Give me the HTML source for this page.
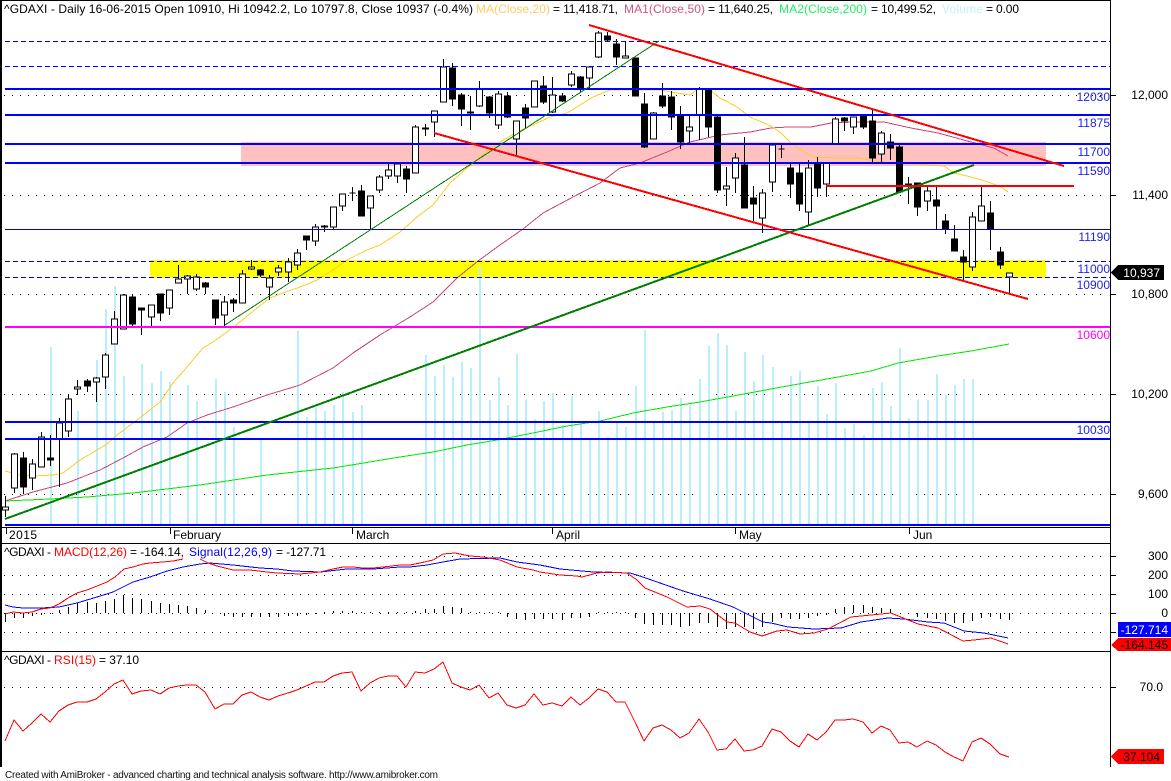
<!DOCTYPE html>
<html><head><meta charset="utf-8"><title>GDAXI</title>
<style>
html,body{margin:0;padding:0;background:#fff;width:1171px;height:781px;overflow:hidden}
svg{display:block}
text{font-family:"Liberation Sans",Arial,sans-serif;font-size:12px;fill:#000}
.c{shape-rendering:crispEdges}
.b{fill:#00f}
</style></head><body>
<svg width="1171" height="781" viewBox="0 0 1171 781" xmlns="http://www.w3.org/2000/svg">
<rect width="1171" height="781" fill="#fff"/>
<g class="c">
<rect x="241" y="142" width="805" height="24" fill="#ffc0c0"/>
<rect x="150" y="260" width="896" height="18" fill="#ff0"/>
<path fill="none" stroke="#000" stroke-dasharray="1 7" d="M4 95.5H1108M4 195.5H1108M4 294.5H1108M4 394.5H1108M4 494.5H1108M4 556.5H1108M4 575.5H1108M4 594.5H1108M4 613.5H1108M4 632.5H1108M4 687.5H1108"/>
<path fill="none" stroke="#b9eeff" stroke-width="2" d="M51 347V526M78 411V526M97 360V526M106 309V526M115 286V526M124 376V526M142 364V526M152 383V526M161 371V526M170 382V526M188 385V526M197 401V526M216 379V526M225 392V526M234 427V526M261 439V526M298 331V526M307 417V526M316 407V526M325 411V526M334 405V526M343 392V526M353 412V526M362 405V526M426 355V526M435 376V526M444 365V526M453 377V526M462 362V526M471 368V526M480 266V526M490 400V526M499 377V526M508 405V526M517 354V526M526 400V526M535 419V526M544 401V526M553 393V526M563 425V526M572 396V526M581 423V526M590 439V526M599 411V526M608 437V526M617 422V526M626 427V526M636 386V526M645 330V526M654 422V526M663 412V526M672 410V526M681 398V526M690 405V526M700 379V526M709 346V526M718 333V526M727 345V526M736 411V526M745 352V526M754 381V526M763 355V526M773 367V526M782 422V526M791 376V526M800 371V526M809 422V526M818 386V526M827 414V526M836 383V526M845 428V526M854 424V526M864 435V526M873 388V526M882 382V526M891 406V526M900 348V526M909 418V526M918 400V526M928 400V526M937 374V526M946 395V526M955 385V526M964 379V526M973 379V526"/>
<polyline fill="none" stroke="#00e800" points="5,501 50,499 87,497 133,493 200,485 267,475 333,468 400,457 433,452 467,445 497,440 533,433 567,426 600,421 633,413 667,407 700,402 733,396 771,389 804,383 838,377 871,371 898,363 938,356 971,351 1009,344"/>
<polyline fill="none" stroke="#cc4477" points="5,501 33,492 67,483 100,470 123,458 143,447 167,437 187,423 207,415 233,407 267,395 300,385 333,368 353,353 380,335 400,323 410,317 433,302 457,278 478,261 500,245 523,229 543,213 573,197 600,183 620,168 640,163 667,152 690,142 720,135 750,132 771,128 788,127 811,127 831,123 854,122 884,122 911,128 938,133 971,142 994,148 1008,156"/>
<polyline fill="none" stroke="#ffcc22" points="5,471 20,475 33,476 53,475 63,473 80,460 97,450 107,444 117,435 133,423 150,410 160,402 173,383 187,367 203,348 213,342 227,332 240,322 257,308 270,298 283,293 300,287 317,280 333,270 347,260 367,250 380,245 400,232 417,217 433,205 450,183 467,168 480,157 500,142 517,132 533,125 550,117 567,113 577,107 593,97 610,90 642,90 660,90 677,93 690,95 697,90 710,90 720,98 737,107 750,117 771,126 781,133 791,143 804,152 814,157 838,158 858,158 881,162 914,164 944,166 954,173 971,177 988,182 1001,187 1008,192"/>
<path fill="none" stroke="#000" d="M5.5 496V517M14.5 453V493M23.5 452V494M32.5 459V490M41.5 432V467M50.5 435V466M59.5 418V487M68.5 394V437M77.5 380V395M87.5 379V392M96.5 377V402M105.5 353V389M114.5 311V344M123.5 294V329M132.5 294V328M141.5 308V335M151.5 305V326M160.5 294V321M169.5 290V315M178.5 265V283M187.5 275V294M196.5 274V291M205.5 282V294M215.5 300V325M224.5 296V328M233.5 298V312M242.5 270V303M251.5 260V270M260.5 269V277M269.5 275V300M278.5 265V276M288.5 258V282M297.5 249V270M306.5 236V250M315.5 224V246M324.5 225V232M333.5 207V229M342.5 194V211M352.5 187V201M361.5 185V216M370.5 196V229M379.5 175V193M388.5 164V179M397.5 164V183M406.5 166V193M415.5 125V173M425.5 124V136M434.5 111V137M443.5 59V102M452.5 63V106M461.5 93V126M470.5 96V130M479.5 81V107M489.5 96V118M498.5 91V129M507.5 92V118M516.5 121V155M525.5 104V128M534.5 81V107M543.5 76V104M552.5 77V113M562.5 93V102M571.5 71V87M580.5 76V92M589.5 67V89M598.5 31V58M607.5 32V41M616.5 39V65M625.5 41V58M635.5 58V96M644.5 93V148M653.5 112V139M662.5 83V108M671.5 91V130M680.5 106V149M689.5 116V143M699.5 87V140M708.5 89V137M717.5 116V193M726.5 167V206M735.5 153V193M744.5 137V208M753.5 186V221M762.5 189V233M772.5 144V192M781.5 144V158M790.5 163V198M799.5 163V211M808.5 160V225M817.5 157V197M826.5 162V197M835.5 117V144M844.5 117V131M853.5 117V134M863.5 115V129M872.5 110V162M881.5 131V162M890.5 134V160M899.5 145V192M908.5 177V204M917.5 183V216M927.5 185V211M936.5 187V229M945.5 214V234M954.5 225V251M963.5 250V281M972.5 212V271M981.5 187V221M990.5 201V250M1000.5 247V269M1009.5 273V293"/>
<path fill="#fff" stroke="#000" d="M2.5 507h6V510h-6zM11.5 454h6V488h-6zM29.5 464h6V478h-6zM38.5 437h6V467h-6zM56.5 423h6V439h-6zM65.5 399h6V431h-6zM74.5 387h6V389h-6zM93.5 378h6V382h-6zM102.5 355h6V377h-6zM111.5 319h6V344h-6zM120.5 295h6V329h-6zM148.5 305h6V317h-6zM166.5 290h6V308h-6zM175.5 279h6V283h-6zM184.5 276h6V279h-6zM193.5 277h6V289h-6zM221.5 302h6V315h-6zM239.5 274h6V303h-6zM248.5 267h6V269h-6zM266.5 278h6V287h-6zM275.5 268h6V272h-6zM285.5 262h6V272h-6zM294.5 253h6V265h-6zM312.5 227h6V241h-6zM330.5 207h6V227h-6zM339.5 194h6V206h-6zM367.5 196h6V208h-6zM376.5 177h6V190h-6zM385.5 170h6V176h-6zM394.5 164h6V176h-6zM412.5 127h6V173h-6zM431.5 111h6V122h-6zM440.5 67h6V102h-6zM476.5 89h6V106h-6zM495.5 94h6V125h-6zM513.5 121h6V139h-6zM531.5 81h6V107h-6zM549.5 95h6V112h-6zM568.5 74h6V85h-6zM586.5 67h6V78h-6zM595.5 33h6V57h-6zM622.5 56h6V58h-6zM650.5 113h6V139h-6zM686.5 127h6V131h-6zM696.5 89h6V115h-6zM723.5 186h6V189h-6zM732.5 158h6V178h-6zM759.5 193h6V218h-6zM769.5 145h6V182h-6zM805.5 168h6V212h-6zM823.5 163h6V184h-6zM832.5 119h6V144h-6zM850.5 117h6V127h-6zM878.5 133h6V154h-6zM924.5 191h6V201h-6zM969.5 217h6V267h-6zM978.5 206h6V221h-6zM1006.5 273h6V277h-6z"/>
<path fill="#000" stroke="#000" d="M20.5 458h6V487h-6zM47.5 458h6V460h-6zM84.5 381h6V386h-6zM129.5 297h6V324h-6zM138.5 308h6V310h-6zM157.5 294h6V313h-6zM202.5 283h6V287h-6zM212.5 300h6V318h-6zM230.5 300h6V303h-6zM257.5 270h6V275h-6zM303.5 236h6V240h-6zM321.5 226h6V227h-6zM349.5 193h6V193h-6zM358.5 191h6V216h-6zM403.5 169h6V179h-6zM422.5 128h6V129h-6zM449.5 68h6V99h-6zM458.5 95h6V109h-6zM467.5 112h6V113h-6zM486.5 97h6V113h-6zM504.5 96h6V117h-6zM522.5 108h6V118h-6zM540.5 86h6V102h-6zM559.5 96h6V101h-6zM577.5 77h6V89h-6zM604.5 36h6V40h-6zM613.5 44h6V57h-6zM632.5 58h6V96h-6zM641.5 104h6V147h-6zM659.5 96h6V106h-6zM668.5 97h6V117h-6zM677.5 116h6V142h-6zM705.5 89h6V127h-6zM714.5 117h6V190h-6zM741.5 165h6V208h-6zM750.5 198h6V204h-6zM778.5 149h6V149h-6zM787.5 168h6V184h-6zM796.5 173h6V204h-6zM814.5 163h6V188h-6zM841.5 118h6V121h-6zM860.5 115h6V127h-6zM869.5 121h6V158h-6zM887.5 142h6V148h-6zM896.5 147h6V192h-6zM905.5 184h6V186h-6zM914.5 183h6V207h-6zM933.5 200h6V206h-6zM942.5 221h6V229h-6zM951.5 239h6V251h-6zM960.5 257h6V262h-6zM987.5 213h6V229h-6zM997.5 252h6V265h-6z"/>
<!-- horizontal study lines -->
<path fill="none" stroke="#00f" d="M5 229.5H1110"/>
<path fill="none" stroke="#00f" stroke-dasharray="5 3" d="M5 41.5H1110M5 66.5H1110M5 261.5H1110M5 277.5H1110"/>
<rect x="5" y="88" width="1105" height="2" class="b"/>
<rect x="5" y="114" width="1105" height="2" class="b"/>
<rect x="5" y="143" width="1105" height="2" class="b"/>
<rect x="5" y="162" width="1105" height="2" class="b"/>
<rect x="5" y="421" width="1105" height="2" class="b"/>
<rect x="5" y="438" width="1105" height="2" class="b"/>
<rect x="5" y="524" width="1105" height="2" class="b"/>
<rect x="5" y="326" width="1105" height="2" fill="#f0f"/>
<!-- trend lines -->
<line x1="225" y1="325" x2="659" y2="41" stroke="#008000"/>
<line x1="5" y1="519" x2="974" y2="165" stroke="#008000" stroke-width="2"/>
<line x1="589" y1="25" x2="1064" y2="166" stroke="#f00" stroke-width="2"/>
<line x1="434" y1="133" x2="1028" y2="299" stroke="#f00" stroke-width="2"/>
<rect x="826" y="185" width="248" height="2" fill="#f00"/>
<!-- frame -->
<rect x="0" y="0" width="1111" height="1" fill="#000"/>
<rect x="0" y="0" width="2" height="767" fill="#000"/>
<rect x="1110" y="0" width="1" height="767" fill="#000"/>
<rect x="0" y="527" width="1110" height="1" fill="#000"/>
<rect x="0" y="543" width="1110" height="1" fill="#000"/>
<rect x="0" y="651" width="1110" height="1" fill="#000"/>
<path fill="none" stroke="#000" d="M6.5 528V534M170.5 528V534M352.5 528V534M552.5 528V534M735.5 528V534M909.5 528V534"/>
<path fill="none" stroke="#000" d="M1111 95.5H1116M1111 195.5H1116M1111 294.5H1116M1111 394.5H1116M1111 494.5H1116M1111 556.5H1116M1111 575.5H1116M1111 594.5H1116M1111 613.5H1116M1111 632.5H1116M1111 687.5H1116"/>
<!-- MACD histogram -->
<path fill="none" stroke="#000" d="M5.5 613V622M14.5 613V618M23.5 613V618M32.5 613V616M41.5 613V615M50.5 613V614M59.5 613V610M68.5 613V607M77.5 613V603M87.5 613V602M96.5 613V603M105.5 613V601M114.5 613V599M123.5 613V595M132.5 613V598M141.5 613V599M151.5 613V601M160.5 613V603M169.5 613V604M178.5 613V605M187.5 613V606M196.5 613V608M205.5 613V610M224.5 613V616M233.5 613V617M242.5 613V617M251.5 613V617M260.5 613V617M269.5 613V617M278.5 613V617M288.5 613V616M297.5 613V616M306.5 613V615M315.5 613V614M324.5 613V612M333.5 613V611M342.5 613V611M352.5 613V611M361.5 613V612M370.5 613V612M379.5 613V612M388.5 613V612M397.5 613V612M406.5 613V612M415.5 613V611M425.5 613V609M434.5 613V609M443.5 613V606M452.5 613V607M461.5 613V608M470.5 613V612M479.5 613V612M489.5 613V612M498.5 613V612M507.5 613V617M516.5 613V619M525.5 613V620M534.5 613V619M543.5 613V619M552.5 613V619M562.5 613V620M571.5 613V618M580.5 613V618M589.5 613V617M598.5 613V612M607.5 613V612M616.5 613V612M625.5 613V612M635.5 613V618M644.5 613V624M653.5 613V625M662.5 613V625M671.5 613V625M680.5 613V627M689.5 613V626M699.5 613V623M708.5 613V623M717.5 613V627M726.5 613V629M735.5 613V627M744.5 613V627M753.5 613V629M762.5 613V627M772.5 613V622M781.5 613V618M790.5 613V619M799.5 613V619M808.5 613V618M817.5 613V616M826.5 613V615M835.5 613V609M844.5 613V607M853.5 613V605M863.5 613V605M872.5 613V607M881.5 613V608M890.5 613V609M908.5 613V614M917.5 613V617M927.5 613V618M936.5 613V619M945.5 613V621M954.5 613V623M963.5 613V623M972.5 613V621M981.5 613V618M990.5 613V617M1000.5 613V619M1009.5 613V620"/>
<rect x="2" y="544" width="330" height="15" fill="#fff"/>
<polyline fill="none" stroke="#00f" points="5,605 13,607 23,608 41,608 59,607 77,603 97,597 113,592 133,582 150,577 167,571 183,567 200,564 210,563 233,565 260,568 277,569 293,571 320,572 347,569 373,569 400,567 410,567 427,565 443,562 460,559 500,558 517,562 540,565 560,569 593,572 630,573 640,576 660,583 683,591 710,599 733,607 763,622 771,623 788,627 814,629 841,628 861,622 888,618 904,619 928,622 944,623 964,631 984,633 1008,638"/>
<polyline fill="none" stroke="#f00" points="5,614 13,612 23,613 32,612 41,609 50,608 59,604 68,598 77,593 87,590 97,586 107,582 115,577 124,569 133,567 143,564 150,563 163,562 173,561 183,559"/>
<polyline fill="none" stroke="#f00" points="200,559 208,563 217,566 233,570 250,570 267,572 277,573 300,574 320,572 333,569 343,567 353,567 363,568 373,568 383,567 400,565 410,565 420,563 433,560 443,554 455,553 470,556 483,557 500,560 517,567 533,570 540,572 560,575 577,576 582,577 597,573 607,572 627,573 637,580 645,588 667,597 687,607 700,606 710,609 727,622 735,623 750,632 762,636 777,631 787,630 800,634 814,633 828,629 851,617 871,615 891,613 918,624 938,628 963,641 974,640 991,638 1008,644"/>
<!-- RSI -->
<polyline fill="none" stroke="#f00" points="5,741 14,720 23,731 32,723 41,714 50,722 59,711 68,705 77,702 87,702 96,699 105,692 114,684 123,680 132,694 141,691 151,690 160,694 169,688 178,686 187,685 196,685 205,692 215,709 224,704 233,704 242,695 251,692 260,697 269,700 278,696 288,693 297,690 306,686 315,682 324,682 333,676 342,673 352,672 361,691 370,683 379,678 388,676 397,676 406,687 415,672 425,673 434,669 443,662 452,683 461,687 470,690 479,685 489,698 498,693 507,705 516,708 525,705 534,694 543,705 552,703 562,706 571,697 580,705 589,698 598,689 607,692 616,702 625,702 635,722 644,741 653,728 662,725 671,730 680,738 689,733 699,719 708,732 717,750 726,749 735,739 744,751 753,750 762,746 772,729 781,732 790,741 799,747 808,734 817,740 826,732 835,720 844,720 853,719 863,722 872,733 881,726 890,730 899,743 908,742 917,747 927,741 936,745 945,752 954,757 963,761 972,742 981,738 990,744 1000,754 1009,757"/>
<!-- tags -->
<polygon points="1111,272.5 1118,265 1164,265 1164,280 1118,280" fill="#000"/>
<rect x="1118" y="622" width="53" height="15" fill="#00f"/>
<polygon points="1111,645 1118,638 1171,638 1171,651 1118,651" fill="#f00"/>
<polygon points="1111,756.5 1118,749 1164,749 1164,764 1118,764" fill="#f00"/>
</g>
<!-- title -->
<text x="4" y="13" textLength="469" lengthAdjust="spacing">^GDAXI - Daily 16-06-2015 Open 10910, Hi 10942.2, Lo 10797.8, Close 10937 (-0.4%)</text>
<text x="476" y="13" textLength="74" style="fill:#ffcc66">MA(Close,20)</text>
<text x="553" y="13" textLength="65">= 11,418.71,</text>
<text x="624" y="13" textLength="81" style="fill:#cc5588">MA1(Close,50)</text>
<text x="708" y="13" textLength="65">= 11,640.25,</text>
<text x="779" y="13" textLength="88" style="fill:#22ee66">MA2(Close,200)</text>
<text x="871" y="13" textLength="65">= 10,499.52,</text>
<text x="942" y="13" textLength="41" style="fill:#c4f0ff">Volume</text>
<text x="986" y="13" textLength="33">= 0.00</text>
<!-- study labels -->
<g text-anchor="end" style="fill:#00f">
<text x="1110" y="101" style="fill:#2222ee">12030</text>
<text x="1110" y="127" style="fill:#2222ee">11875</text>
<text x="1110" y="156" style="fill:#2222ee">11700</text>
<text x="1110" y="175" style="fill:#2222ee">11590</text>
<text x="1110" y="241" style="fill:#2222ee">11190</text>
<text x="1110" y="273" style="fill:#2222ee">11000</text>
<text x="1110" y="289" style="fill:#2222ee">10900</text>
<text x="1110" y="339" style="fill:#f0f">10600</text>
<text x="1110" y="434" style="fill:#2222ee">10030</text>
</g>
<!-- axis labels -->
<g text-anchor="end">
<text x="1168" y="99">12,000</text>
<text x="1168" y="199">11,400</text>
<text x="1168" y="298">10,800</text>
<text x="1168" y="398">10,200</text>
<text x="1168" y="498">9,600</text>
<text x="1168" y="560">300</text>
<text x="1168" y="579">200</text>
<text x="1168" y="598">100</text>
<text x="1168" y="617">0</text>
<text x="1163" y="691">70.0</text>
<text x="1168" y="634" style="fill:#fff">-127.714</text>
<text x="1168" y="649">-164.145</text>
<text x="1160" y="761">37.104</text>
<text x="1160" y="277" style="fill:#fff">10,937</text>
</g>
<!-- x axis -->
<text x="9" y="539" textLength="28">2015</text>
<text x="173" y="539">February</text>
<text x="356" y="539">March</text>
<text x="556" y="539">April</text>
<text x="739" y="539">May</text>
<text x="913" y="539">Jun</text>
<!-- panel titles -->
<text x="4" y="556" textLength="47">^GDAXI -</text>
<text x="54" y="556" textLength="73" style="fill:#f00">MACD(12,26)</text>
<text x="130" y="556" textLength="54">= -164.14,</text>
<text x="189" y="556" textLength="83" style="fill:#00f">Signal(12,26,9)</text>
<text x="276" y="556" textLength="50">= -127.71</text>
<text x="4" y="664" textLength="47">^GDAXI -</text>
<text x="54" y="664" textLength="42" style="fill:#f00">RSI(15)</text>
<text x="99" y="664" textLength="40">= 37.10</text>
<text x="5" y="778" style="font-size:10px;fill:#111" textLength="433" lengthAdjust="spacing">Created with AmiBroker - advanced charting and technical analysis software. http://www.amibroker.com</text>
</svg>
</body></html>
